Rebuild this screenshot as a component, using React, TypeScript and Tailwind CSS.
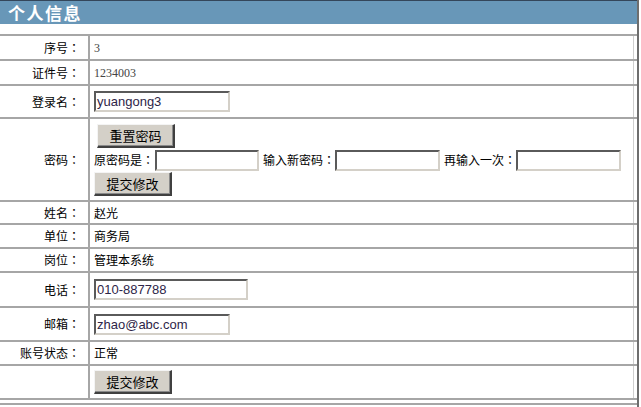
import React from "react";

const cjk = { fontFamily: '"Noto Sans CJK SC", "Liberation Sans", sans-serif' };
// centred full-width colon, as in the label column
const colonFont = { fontFamily: '"Noto Sans CJK JP", "Noto Sans CJK SC", sans-serif' };
const latin = { fontFamily: '"Liberation Sans", Arial, sans-serif' };
const serif = { fontFamily: '"Liberation Serif", "Times New Roman", serif' };

function Label({ text }: { text: string }) {
  return (
    <span className="whitespace-nowrap shrink-0">
      {text}
      <span style={colonFont}>：</span>
    </span>
  );
}

function Row({
  h,
  label,
  children,
  last,
}: {
  h: string;
  label?: string;
  children?: React.ReactNode;
  last?: boolean;
}) {
  return (
    <div
      className={`flex ${h} border-t-2 border-t-[#a6a6a6] ${last ? "border-b-2 border-b-[#a6a6a6]" : ""}`}
    >
      <div
        className="w-[90px] shrink-0 flex items-center justify-end pr-[8px] border-r-2 border-r-[#a6a6a6] text-[12px] text-black"
        style={cjk}
      >
        {label ? <Label text={label} /> : null}
      </div>
      <div className="flex-1 flex items-center pl-[4px] border-r border-r-[#cfcfcf]">
        {children}
      </div>
      <div className="w-[3px] shrink-0" />
    </div>
  );
}

function TextBox({ w, value }: { w: string; value?: string }) {
  return (
    <div
      className={`${w} h-[21px] shrink-0 flex items-center pl-[1px] bg-white border-2 border-t-[#5a5a5a] border-l-[#5a5a5a] border-r-[#d4d0c8] border-b-[#d4d0c8] text-[13px] text-[#2e2548] leading-none overflow-hidden whitespace-nowrap`}
      style={latin}
    >
      {value}
    </div>
  );
}

function Btn({ label, extra }: { label: string; extra?: string }) {
  return (
    <div
      className={`w-[78px] h-[24px] shrink-0 flex items-center justify-center bg-[#d4d0c8] border-t border-l border-t-[#f4f4f4] border-l-[#f4f4f4] border-b-2 border-r-2 border-b-[#404040] border-r-[#404040] shadow-[inset_-1px_-1px_0_#8a8a8a] text-[13px] text-black ${extra ?? ""}`}
      style={cjk}
    >
      {label}
    </div>
  );
}

function Plain({ children }: { children: React.ReactNode }) {
  return (
    <span className="text-[12px] text-black" style={cjk}>
      {children}
    </span>
  );
}

export default function App() {
  return (
    <div className="w-[641px] h-[407px] bg-white overflow-hidden">
      <div className="w-[639px] h-full border-r-2 border-r-[#6e6e6e]">
        {/* title bar */}
        <div className="h-[24px] border-t border-t-[#34465a] bg-[#6897b8] flex items-center pl-[8px]">
          <span
            className="text-[17px] font-bold text-white tracking-[1.5px] leading-none"
            style={cjk}
          >
            个人信息
          </span>
        </div>
        <div className="h-[10px]" />

        {/* profile table */}
        <Row h="h-[25px]" label="序号">
          <span className="text-[12px] text-[#444]" style={serif}>
            3
          </span>
        </Row>
        <Row h="h-[25px]" label="证件号">
          <span className="text-[12px] text-[#444]" style={serif}>
            1234003
          </span>
        </Row>
        <Row h="h-[33px]" label="登录名">
          <TextBox w="w-[136px]" value="yuangong3" />
        </Row>
        <Row h="h-[83px]" label="密码">
          <div className="flex flex-col items-start self-start pt-[5px]">
            <Btn label="重置密码" extra="ml-[3px]" />
            <div
              className="h-[24px] flex items-center text-[12px] text-black whitespace-nowrap"
              style={cjk}
            >
              <Label text="原密码是" />
              <div className="ml-[1px]">
                <TextBox w="w-[104px]" />
              </div>
              <div className="ml-[4px]">
                <Label text="输入新密码" />
              </div>
              <TextBox w="w-[105px]" />
              <div className="ml-[4px]">
                <Label text="再输入一次" />
              </div>
              <TextBox w="w-[105px]" />
            </div>
            <Btn label="提交修改" />
          </div>
        </Row>
        <Row h="h-[23px]" label="姓名">
          <Plain>赵光</Plain>
        </Row>
        <Row h="h-[24px]" label="单位">
          <Plain>商务局</Plain>
        </Row>
        <Row h="h-[24px]" label="岗位">
          <Plain>管理本系统</Plain>
        </Row>
        <Row h="h-[35px]" label="电话">
          <TextBox w="w-[154px]" value="010-887788" />
        </Row>
        <Row h="h-[34px]" label="邮箱">
          <TextBox w="w-[136px]" value="zhao@abc.com" />
        </Row>
        <Row h="h-[24px]" label="账号状态">
          <Plain>正常</Plain>
        </Row>
        <Row h="h-[36px]" last>
          <Btn label="提交修改" />
        </Row>

        <div className="h-[3px]" />
        <div className="h-[2px] bg-[#a6a6a6]" />
      </div>
    </div>
  );
}
